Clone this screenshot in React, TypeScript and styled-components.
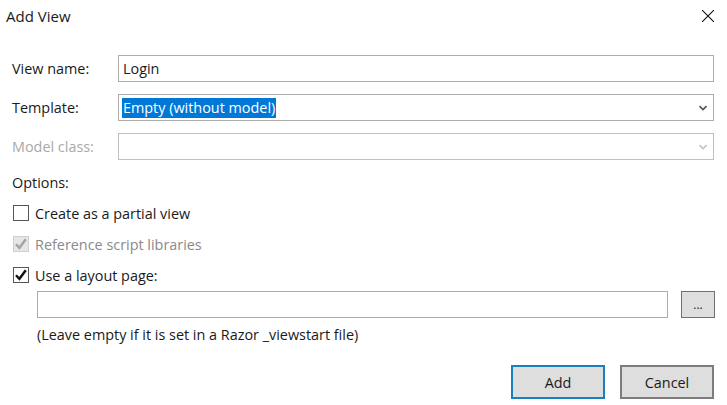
import * as React from 'react';
import styled, { createGlobalStyle } from 'styled-components';

const Global = createGlobalStyle`
  html, body { margin: 0; padding: 0; background: #fff; }
  body { font-family: "Open Sans", "Noto Sans", "Liberation Sans", sans-serif; font-size: 14.4px; color: #1a1a1a; }
`;

const Dialog = styled.div`
  width: 727px;
  height: 405px;
  display: flex;
  flex-direction: column;
  overflow: hidden;
`;

const TitleBar = styled.div`
  height: 31px;
  display: flex;
  align-items: center;
  justify-content: space-between;
  padding: 0 13px 0 6px;
`;

const Title = styled.span`
  font-size: 15px;
`;

const CloseButton = styled.button`
  border: 0;
  background: none;
  padding: 0;
  width: 12px;
  height: 12px;
  display: flex;
  color: #111;
`;

const Form = styled.div`
  display: flex;
  flex-direction: column;
  padding: 24px 13px 0 12px;
`;

const FieldRows = styled.div`
  display: flex;
  flex-direction: column;
  gap: 12px;
`;

const FieldRow = styled.div`
  display: grid;
  grid-template-columns: 106px 1fr;
  align-items: center;
`;

const FieldLabel = styled.label<{ $disabled?: boolean }>`
  color: ${({ $disabled }) => ($disabled ? '#a9a9a9' : '#1a1a1a')};
`;

const TextBox = styled.input`
  box-sizing: border-box;
  width: 100%;
  height: 27px;
  border: 1px solid #ababab;
  outline: none;
  padding: 0 4px;
  font: inherit;
  color: #1a1a1a;
  background: #fff;
`;

const Combo = styled.div<{ $disabled?: boolean }>`
  box-sizing: border-box;
  height: 27px;
  display: flex;
  align-items: center;
  justify-content: space-between;
  padding: 0 6px 0 3px;
  border: 1px solid ${({ $disabled }) => ($disabled ? '#bfbfbf' : '#ababab')};
  color: ${({ $disabled }) => ($disabled ? '#c4c4c4' : '#555')};
`;

const Selected = styled.span`
  background: #0078d7;
  color: #fff;
  height: 20px;
  line-height: 19px;
  padding: 0 1px;
`;

const OptionsLabel = styled.div`
  margin-top: 13px;
  height: 20px;
  line-height: 20px;
`;

const Checks = styled.div`
  display: flex;
  flex-direction: column;
  margin-top: 10px;
  gap: 11px;
`;

const CheckRow = styled.div<{ $disabled?: boolean }>`
  height: 20px;
  display: flex;
  align-items: center;
  gap: 6px;
  padding-left: 1px;
  color: ${({ $disabled }) => ($disabled ? '#8a8a8a' : '#1a1a1a')};
`;

const Box = styled.span<{ $disabled?: boolean }>`
  box-sizing: border-box;
  width: 16px;
  height: 16px;
  display: flex;
  align-items: center;
  justify-content: center;
  border: 1px solid ${({ $disabled }) => ($disabled ? '#d0d0d0' : '#555')};
  background: ${({ $disabled }) => ($disabled ? '#e6e6e6' : '#fff')};
  color: ${({ $disabled }) => ($disabled ? '#a3a3a3' : '#111')};
`;

const LayoutBlock = styled.div`
  display: flex;
  flex-direction: column;
  padding-left: 25px;
  margin-top: 6px;
`;

const PathRow = styled.div`
  display: flex;
  align-items: center;
  gap: 13px;
`;

const BrowseButton = styled.button`
  box-sizing: border-box;
  flex: none;
  width: 34px;
  height: 27px;
  margin-right: -1px;
  border: 1px solid #707070;
  background: #dedede;
  padding: 0;
  font: inherit;
  font-size: 12px;
  color: #1a1a1a;
`;

const Hint = styled.div`
  margin-top: 7px;
  line-height: 20px;
`;

const Footer = styled.div`
  display: flex;
  justify-content: flex-end;
  gap: 15px;
  margin-top: 20px;
`;

const ActionButton = styled.button<{ $primary?: boolean }>`
  box-sizing: border-box;
  width: 94px;
  height: 34px;
  border: 2px solid ${({ $primary }) => ($primary ? '#1a80bd' : '#7c7c7c')};
  background: #dedede;
  padding: 0;
  font: inherit;
  color: #1a1a1a;
`;

const Tick = () => (
  <svg width="14" height="14" viewBox="0 0 14 14" fill="none" stroke="currentColor" strokeWidth="2.4">
    <path d="M2 7.2 L5.4 10.8 L11.8 2.2" />
  </svg>
);

const Chevron = () => (
  <svg width="8" height="6" viewBox="0 0 8 6" fill="none" stroke="currentColor" strokeWidth="1.6">
    <path d="M0.5 1 L4 4.5 L7.5 1" />
  </svg>
);

export default function App() {
  return (
    <>
      <Global />
      <Dialog>
        <TitleBar>
          <Title>Add View</Title>
          <CloseButton aria-label="Close">
            <svg width="12" height="12" viewBox="0 0 12 12" stroke="currentColor" strokeWidth="1.1" fill="none">
              <path d="M0 0 L12 12 M12 0 L0 12" />
            </svg>
          </CloseButton>
        </TitleBar>
        <Form>
          <FieldRows>
            <FieldRow>
              <FieldLabel>View name:</FieldLabel>
              <TextBox defaultValue="Login" readOnly />
            </FieldRow>
            <FieldRow>
              <FieldLabel>Template:</FieldLabel>
              <Combo>
                <Selected>Empty (without model)</Selected>
                <Chevron />
              </Combo>
            </FieldRow>
            <FieldRow>
              <FieldLabel $disabled>Model class:</FieldLabel>
              <Combo $disabled>
                <span />
                <Chevron />
              </Combo>
            </FieldRow>
          </FieldRows>
          <OptionsLabel>Options:</OptionsLabel>
          <Checks>
            <CheckRow>
              <Box />
              Create as a partial view
            </CheckRow>
            <CheckRow $disabled>
              <Box $disabled><Tick /></Box>
              Reference script libraries
            </CheckRow>
            <CheckRow>
              <Box><Tick /></Box>
              Use a layout page:
            </CheckRow>
          </Checks>
          <LayoutBlock>
            <PathRow>
              <TextBox readOnly />
              <BrowseButton>...</BrowseButton>
            </PathRow>
            <Hint>(Leave empty if it is set in a Razor _viewstart file)</Hint>
          </LayoutBlock>
          <Footer>
            <ActionButton $primary>Add</ActionButton>
            <ActionButton>Cancel</ActionButton>
          </Footer>
        </Form>
      </Dialog>
    </>
  );
}
